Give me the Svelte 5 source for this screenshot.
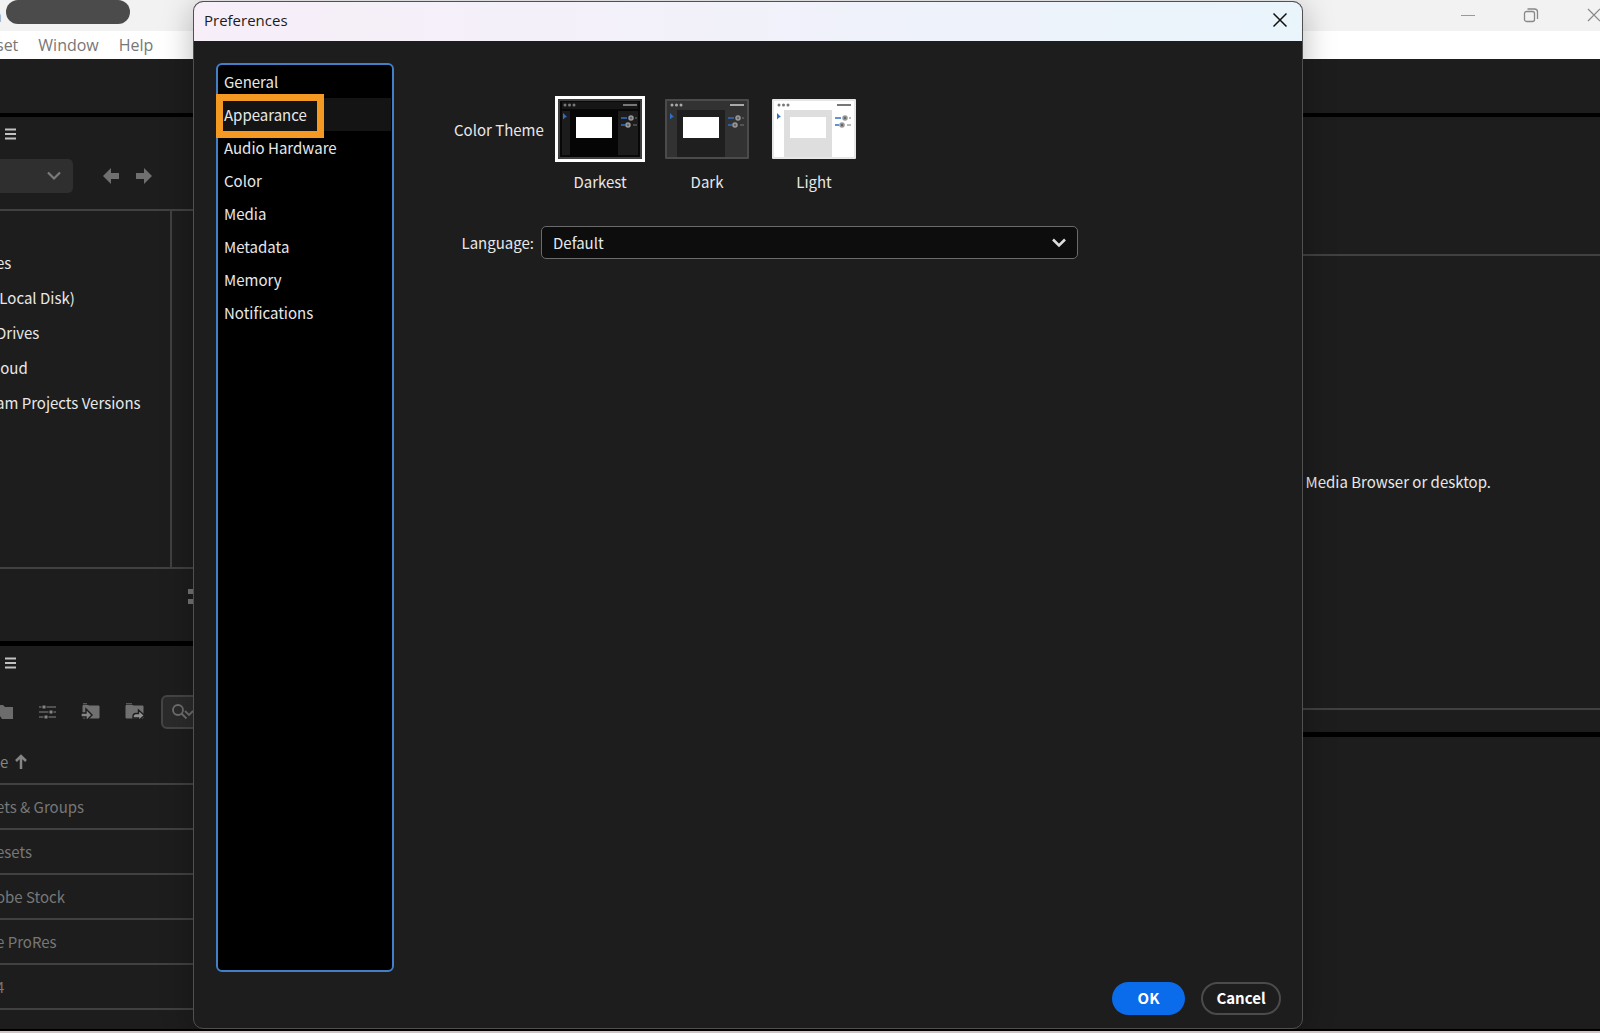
<script>
	const sections = [
		"General",
		"Appearance",
		"Audio Hardware",
		"Color",
		"Media",
		"Metadata",
		"Memory",
		"Notifications",
	];
	const themes = [
		{ name: "Darkest", frame: "#3f3f3f", edge: "#080808", bar: "#161616", side: "#1c1c1c", canvas: "#050505", dots: "#777" },
		{ name: "Dark", frame: "#4b4b4b", edge: "#323232", bar: "#323232", side: "#323232", canvas: "#1f1f1f", dots: "#aaa" },
		{ name: "Light", frame: "#e6e6e6", edge: "#ffffff", bar: "#ffffff", side: "#ffffff", canvas: "#dedede", dots: "#777" },
	];
	const drives = ["es", "\u00a0Local Disk)", "Drives", "loud", "am Projects Versions"];
	const presets = ["ets & Groups", "esets", "obe Stock", "e ProRes", "4"];

	let section = $state("Appearance");
	let theme = $state("Darkest");
</script>

{#snippet hamburger()}
	<button class="icon menu" aria-label="Panel menu">
		<svg width="12" height="12" viewBox="0 0 12 12"><path d="M0 1.500h11M0 6h11M0 10.500h11" stroke="#c2c2c2" stroke-width="1.800" /></svg>
	</button>
{/snippet}

<div class="app">
	<header class="titlebar">
		<span class="app-name">a</span>
		<span class="pill"></span>
		<div class="window-buttons">
			<button class="icon" aria-label="Minimize">
				<svg width="16" height="16" viewBox="0 0 16 16"><path d="M1 8.500h14" stroke="#999" /></svg>
			</button>
			<button class="icon" aria-label="Restore">
				<svg width="16" height="16" viewBox="0 0 16 16" fill="none" stroke="#888" stroke-width="1.300">
					<rect x="1.500" y="4.500" width="10" height="10" rx="2" />
					<path d="M4.500 2h7q3 0 3 3v7" />
				</svg>
			</button>
			<button class="icon" aria-label="Close window">
				<svg width="16" height="16" viewBox="0 0 16 16"><path d="M2 2l12 12M14 2L2 14" stroke="#888" stroke-width="1.200" /></svg>
			</button>
		</div>
	</header>
	<nav class="menubar">
		<button>set</button>
		<button>Window</button>
		<button>Help</button>
	</nav>
	<div class="strip"></div>

	<main class="workspace">
		<div class="column">
			<section class="panel browser">
				{@render hamburger()}
				<div class="location">
					<div class="drive-select">
						<select aria-label="Location"><option></option></select>
						<svg width="16" height="10" viewBox="0 0 16 10"><path d="M2 1.500l6 6 6-6" fill="none" stroke="#7b7b7b" stroke-width="2.200" /></svg>
					</div>
					<button class="icon" aria-label="Back">
						<svg width="18" height="18" viewBox="0 0 18 18"><path d="M1 9l8-8v5h8v6H9v5z" fill="#6f6f6f" /></svg>
					</button>
					<button class="icon" aria-label="Forward">
						<svg width="18" height="18" viewBox="0 0 18 18"><path d="M17 9L9 1v5H1v6h8v5z" fill="#6f6f6f" /></svg>
					</button>
				</div>
				<div class="files">
					<ul class="drives">
						{#each drives as drive}
							<li>{drive}</li>
						{/each}
					</ul>
				</div>
				<div class="view-bar">
					<svg width="16" height="16" viewBox="0 0 16 16" fill="#757575">
						<path d="M0 0h5v5H0zM0 10h5v5H0zM8 0h8v5H8zM8 10h8v5H8z" />
					</svg>
				</div>
			</section>

			<section class="panel presets">
				{@render hamburger()}
				<div class="tools">
					<button class="icon" aria-label="New group">
						<svg width="20" height="18" viewBox="0 0 20 18"><path d="M0 2h7l2 2h8v12H6l-2-3-4 2z" fill="#6c6c6c" /></svg>
					</button>
					<button class="icon" aria-label="Preset settings">
						<svg width="20" height="18" viewBox="0 0 20 18">
							<path d="M0 4h17M0 9h17M0 14h17" stroke="#636363" stroke-width="1.600" />
							<path d="M3 2h4v4H3zM10 7h4v4h-4zM5 12h4v4H5z" fill="#858585" stroke="#1d1d1d" />
						</svg>
					</button>
					<button class="icon" aria-label="Import preset">
						<svg width="20" height="18" viewBox="0 0 20 18">
							<path d="M1 .8h4M1 8V2.500h5L7 3h10v12H1z" fill="#707070" stroke="#707070" />
							<path d="M-1 10h5V6l6 6-6 6v-4h-5z" fill="#858585" stroke="#1d1d1d" stroke-width="1.400" />
						</svg>
					</button>
					<button class="icon" aria-label="Export preset">
						<svg width="20" height="18" viewBox="0 0 20 18">
							<path d="M1 .8h6M1 4V2.500h6L9 3h9v12H1z" fill="#707070" stroke="#707070" />
							<path d="M8 14q0-3.500 3-3.500h2.500V7l6 5.500-6 5V15H8z" fill="#909090" stroke="#1d1d1d" stroke-width="1.400" />
						</svg>
					</button>
					<label class="search">
						<svg width="24" height="18" viewBox="0 0 24 18" fill="none" stroke="#6f6f6f" stroke-width="1.800">
							<circle cx="7" cy="7" r="5" />
							<path d="M10.500 10.500l5 5M14 8l4 4 4-4" />
						</svg>
						<input type="search" aria-label="Search presets" />
					</label>
				</div>
				<div class="sort">
					e
					<svg width="14" height="16" viewBox="0 0 14 16"><path d="M7 15V3M2 7l5-5 5 5" fill="none" stroke="#858585" stroke-width="2.500" /></svg>
				</div>
				<ul class="preset-list">
					{#each presets as preset}
						<li>{preset}</li>
					{/each}
				</ul>
			</section>
		</div>

		<div class="column">
			<section class="panel queue">
				<div class="queue-head"></div>
				<p class="drop-hint">Media Browser or desktop.</p>
				<div class="queue-foot"></div>
			</section>
			<section class="panel encoding"></section>
		</div>
	</main>

	<div class="dialog" role="dialog" aria-labelledby="dialog-title">
		<header class="dialog-title">
			<h1 id="dialog-title">Preferences</h1>
			<button class="icon" aria-label="Close">
				<svg width="16" height="16" viewBox="0 0 16 16"><path d="M1.500 1.500l13 13M14.500 1.500l-13 13" stroke="#111" stroke-width="1.500" /></svg>
			</button>
		</header>

		<div class="dialog-body">
			<nav class="sections">
				{#each sections as name}
					<button class:active={section === name} onclick={() => (section = name)}>{name}</button>
				{/each}
			</nav>

			<div class="settings">
				<div class="theme-row">
					<span class="row-label">Color Theme</span>
					<div class="themes">
						{#each themes as t}
							<button class="theme" class:chosen={theme === t.name} onclick={() => (theme = t.name)}>
								<svg width="84" height="60" viewBox="0 0 84 60">
									<rect width="84" height="60" rx="1" fill={t.frame} />
									<rect x="2" y="2" width="80" height="56" fill={t.edge} />
									<path d="M12 11h48v47H12z" fill={t.canvas} />
									<path d="M4 3h76v7H4z" fill={t.bar} />
									<path d="M4 12h8v44H4zM60 12h20v44H60z" fill={t.side} />
									<path d="M18 18h36v21H18z" fill="#fff" />
									<g fill={t.dots}>
										<circle cx="7" cy="6" r="1.500" />
										<circle cx="11.500" cy="6" r="1.500" />
										<circle cx="16" cy="6" r="1.500" />
										<path d="M65 5h14v2H65z" />
									</g>
									<path d="M5 14l4 4-2 .5-2 2z" fill="#2f6fc4" />
									<path d="M63 19h6M63 26h4" stroke="#2f6fc4" stroke-width="1.500" />
									<path d="M77 19h2M75 26h4" stroke="#777" />
									<circle cx="73" cy="19" r="2" fill="#666" stroke="#999" stroke-width="1.500" />
									<circle cx="70" cy="26" r="2" fill="#666" stroke="#999" stroke-width="1.500" />
								</svg>
								{t.name}
							</button>
						{/each}
					</div>
				</div>

				<div class="language-row">
					<label class="row-label" for="language">Language:</label>
					<div class="language">
						<select id="language"><option>Default</option></select>
						<svg width="16" height="10" viewBox="0 0 16 10"><path d="M2 1.500l6 6 6-6" fill="none" stroke="#dedede" stroke-width="2.500" /></svg>
					</div>
				</div>
			</div>
		</div>

		<footer>
			<button class="ok">OK</button>
			<button class="cancel">Cancel</button>
		</footer>
	</div>
</div>

<style>
	:global(body) {
		margin: 0;
		background: #000;
	}

	.app {
		--ui: "Noto Sans CJK SC", "Noto Sans", sans-serif;
		--system: "Open Sans", "Noto Sans", sans-serif;
		--line: #414141;
		position: relative;
		display: flex;
		flex-direction: column;
		box-sizing: border-box;
		min-height: 100vh;
		overflow: hidden;
		border-bottom: 2px solid #cfc3c3;
		color: #e8e8e8;
		font: 15px/24px var(--ui);
	}

	.app * {
		box-sizing: border-box;
	}

	button,
	select,
	input {
		margin: 0;
		padding: 0;
		border: 0;
		background: none;
		color: inherit;
		font: inherit;
	}

	ul {
		margin: 0;
		padding: 0;
		list-style: none;
	}

	svg {
		display: block;
		flex: none;
		overflow: visible;
	}

	.icon {
		display: flex;
		flex: none;
	}

	/* main window chrome */
	.titlebar {
		display: flex;
		height: 31px;
		background: #f2f2f2;
	}

	.app-name {
		display: flex;
		justify-content: flex-end;
		width: 6px;
		padding-right: 4px;
		color: #999;
		font: 16px/32px var(--system);
	}

	.pill {
		width: 124px;
		height: 24px;
		border-radius: 12px;
		background: #4b4b4b;
	}

	.window-buttons {
		display: flex;
		gap: 47px;
		margin: 7px -2px 0 auto;
	}

	.menubar {
		display: flex;
		gap: 20px;
		height: 28px;
		margin-left: -4px;
		background: #fff;
		color: #777;
		font: 16px/28px var(--system);
	}

	.strip {
		height: 54px;
		background: #1d1d1d;
	}

	.workspace {
		display: flex;
		flex: 1;
		padding: 4px 0 2px;
	}

	.column {
		display: flex;
		flex: 1;
		flex-direction: column;
		gap: 5px;
	}

	.panel {
		display: flex;
		flex-direction: column;
		background: #1d1d1d;
	}

	.menu {
		margin: 11px 0 0 5px;
	}

	/* media browser */
	.location {
		display: flex;
		align-items: center;
		gap: 15px;
		margin: 19px 0 16px;
	}

	.drive-select {
		display: flex;
		align-items: center;
		width: 73px;
		height: 34px;
		margin-right: 14px;
		padding-right: 11px;
		border-radius: 0 5px 5px 0;
		background: #2f2f2f;
	}

	.drive-select select {
		flex: 1;
		min-width: 0;
		appearance: none;
	}

	.files {
		border: solid var(--line);
		border-width: 2px 0;
	}

	.drives {
		width: 172px;
		height: 356px;
		padding-top: 34px;
		border-right: 2px solid var(--line);
	}

	.drives li {
		height: 35px;
		margin-left: -4px;
		line-height: 35px;
		white-space: nowrap;
	}

	.view-bar {
		height: 72px;
		padding: 20px 0 0 188px;
	}

	/* preset browser */
	.presets {
		flex: 1;
		color: #777;
	}

	.tools {
		display: flex;
		align-items: center;
		gap: 23px;
		height: 34px;
		margin: 26px 0 17px -4px;
	}

	.search {
		display: flex;
		align-items: center;
		width: 240px;
		height: 34px;
		margin-left: -7px;
		padding-left: 8px;
		border: 2px solid #454545;
		border-radius: 6px;
		background: #2b2b2b;
	}

	.search input {
		flex: 1;
		min-width: 0;
	}

	.sort {
		display: flex;
		align-items: center;
		gap: 6px;
		height: 32px;
		color: #858585;
	}

	.preset-list {
		margin-top: 5px;
		border-bottom: 2px solid var(--line);
	}

	.preset-list li {
		height: 45px;
		border-top: 2px solid var(--line);
		line-height: 44px;
		text-indent: -4px;
	}

	/* queue */
	.queue {
		height: 615px;
	}

	.queue-head {
		height: 139px;
		border-bottom: 2px solid var(--line);
	}

	.drop-hint {
		flex: 1;
		display: flex;
		align-items: center;
		justify-content: flex-end;
		margin: 0;
		padding-right: 109px;
	}

	.queue-foot {
		height: 24px;
		border-top: 2px solid var(--line);
	}

	.encoding {
		flex: 1;
	}

	/* preferences dialog floats over the main window */
	.dialog {
		position: absolute;
		inset: 1px 297px 2px 193px;
		display: flex;
		flex-direction: column;
		border: 1px solid #505050;
		border-radius: 10px;
		background: #1d1d1d;
		box-shadow: 0 6px 32px rgba(0, 0, 0, 0.28);
	}

	.dialog-title {
		display: flex;
		align-items: center;
		justify-content: space-between;
		height: 39px;
		padding: 0 14px 3px 10px;
		border-radius: 9px 9px 0 0;
		background: linear-gradient(90deg, #f7eef8, #f3f1fa 40%, #e9f4fb);
	}

	h1 {
		margin: 0;
		color: #1c1c1c;
		font: 15px/24px var(--system);
	}

	.dialog-body {
		display: flex;
		flex: 1;
		padding: 22px 24px 0 22px;
	}

	.sections {
		display: flex;
		flex-direction: column;
		width: 178px;
		padding: 0 1px;
		border: 2px solid #437fc6;
		border-radius: 6px;
		background: #000;
	}

	.sections button {
		position: relative;
		height: 33px;
		padding-left: 5px;
		text-align: left;
	}

	.sections .active {
		background: #141414;
	}

	.sections .active::after {
		content: "";
		position: absolute;
		inset: -4px 67px -7px -3px;
		border: 7px solid #f49a22;
	}

	.settings {
		flex: 1;
		padding: 36px 200px 0 60px;
	}

	.theme-row {
		display: flex;
		gap: 16px;
	}

	.row-label {
		flex: none;
		width: 88px;
		text-align: right;
		white-space: nowrap;
	}

	.theme-row .row-label {
		line-height: 62px;
	}

	.themes {
		display: flex;
		gap: 23px;
	}

	.theme {
		display: flex;
		flex-direction: column;
		align-items: center;
		gap: 11px;
	}

	.chosen svg {
		outline: 3px solid #fff;
	}

	.language-row {
		display: flex;
		align-items: center;
		gap: 7px;
		margin-top: 32px;
	}

	.language-row .row-label {
		width: 80px;
	}

	.language {
		position: relative;
		flex: 1;
	}

	.language select {
		display: block;
		width: 100%;
		height: 33px;
		padding: 0 0 0 11px;
		border: 1px solid #6b6b6b;
		border-radius: 5px;
		background: #0d0d0d;
		appearance: none;
	}

	.language svg {
		position: absolute;
		top: 12px;
		right: 11px;
		pointer-events: none;
	}

	footer {
		display: flex;
		justify-content: flex-end;
		gap: 16px;
		padding: 10px 21px 13px;
	}

	footer button {
		height: 33px;
		padding-bottom: 2px;
		border-radius: 17px;
		color: #fff;
		font-weight: 700;
	}

	.ok {
		width: 73px;
		background: #0a6ceb;
	}

	.cancel {
		width: 80px;
		border: 2px solid #4b4b4b;
	}
</style>
